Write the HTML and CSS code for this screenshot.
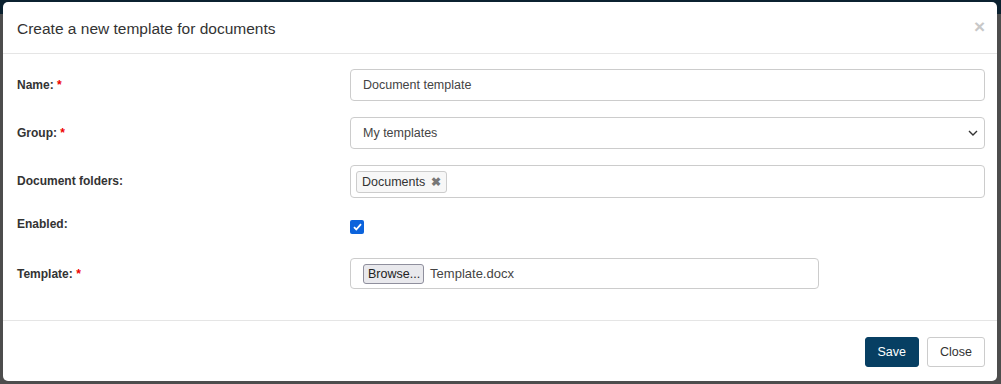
FILE: index.html
```html
<!DOCTYPE html>
<html lang="en">
<head>
  <meta charset="UTF-8" />
  <title>Create a new template</title>
  <link rel="stylesheet" href="styles.css">
</head>
<body>
  <div class="modal">
    <div class="modal-header">
      <h4>Create a new template for documents</h4>
      <span class="close-x">&times;</span>
    </div>

    <form class="modal-body">
      <div class="row">
        <label>Name: <span class="req">*</span></label>
        <input class="field" type="text" value="Document template" />
      </div>
      <div class="row">
        <label>Group: <span class="req">*</span></label>
        <div class="field select">
          <span>My templates</span>
          <svg width="10" height="6" viewBox="0 0 10 6"><path d="M1 1l4 4 4-4" fill="none" stroke="#333" stroke-width="1.4"/></svg>
        </div>
      </div>
      <div class="row">
        <label>Document folders:</label>
        <div class="field tags">
          <span class="tag">Documents <b>&#x2716;</b></span>
        </div>
      </div>
      <div class="row row-check">
        <label>Enabled:</label>
        <span class="check">
          <svg width="9" height="8" viewBox="0 0 9 8"><path d="M1 4.2l2.3 2.3L8 1.2" fill="none" stroke="#fff" stroke-width="1.8"/></svg>
        </span>
      </div>
      <div class="row row-file">
        <label>Template: <span class="req">*</span></label>
        <div class="field file">
          <span class="browse">Browse...</span>
          <span>Template.docx</span>
        </div>
      </div>
    </form>

    <div class="modal-footer">
      <button class="btn btn-primary" type="button">Save</button>
      <button class="btn" type="button">Close</button>
    </div>
  </div>
</body>
</html>
```

FILE: styles.css
```css
body {
  margin: 0;
  padding: 2px 4px 3px 3px;
  font-family: 'Liberation Sans', Arial, sans-serif;
  background: linear-gradient(#0b2130 0, #0b2130 14px, #4d4d4d 14px);
  color: #333;
}

.modal {
  background: #fff;
  border-radius: 5px;
  height: 379px;
  display: flex;
  flex-direction: column;
}

.modal-header {
  height: 51px;
  border-bottom: 1px solid #e5e5e5;
  display: flex;
  align-items: center;
  justify-content: space-between;
  padding: 0 12px 0 14px;
}

.modal-header h4 {
  margin: 0;
  font-size: 15.5px;
  font-weight: normal;
  color: #333;
  padding-top: 2px;
}

.close-x {
  color: #c8c8c8;
  font-size: 19px;
  font-weight: bold;
  margin-top: -2px;
}

.modal-body {
  flex: 1;
  padding: 15px 12px 0 14px;
  border-bottom: 1px solid #e5e5e5;
}

.row {
  display: grid;
  grid-template-columns: 333px 1fr;
  align-items: start;
  margin-bottom: 16px;
}

.row label {
  font-size: 12px;
  font-weight: bold;
  color: #333;
  padding-top: 9px;
}

.req {
  color: #e00;
}

.field {
  box-sizing: border-box;
  height: 32px;
  border: 1px solid #ccc;
  border-radius: 4px;
  padding: 0 12px;
  font: 12.5px 'Liberation Sans', Arial, sans-serif;
  color: #444;
  background: #fff;
  display: flex;
  align-items: center;
  width: 100%;
}

.select {
  justify-content: space-between;
  padding-right: 6px;
}

.tags {
  height: 33px;
  padding: 0 5px;
}

.tag {
  border: 1px solid #ccc;
  background: #f7f7f7;
  border-radius: 3px;
  padding: 3px 5px 3px 5px;
  font-size: 12.5px;
  color: #333;
}

.tag b {
  color: #777;
  font-size: 12px;
  margin-left: 2px;
}

.row-check {
  height: 28px;
}

.row-check label {
  padding-top: 3px;
}

.check {
  margin-top: 6px;
  width: 14px;
  height: 14px;
  border-radius: 2px;
  background: #0b63dc;
  display: flex;
  align-items: center;
  justify-content: center;
}

.file {
  width: 469px;
  height: 31px;
  padding: 0 6px 0 12px;
  gap: 6px;
  font-size: 13px;
}

.browse {
  background: #e9e9ed;
  border: 1px solid #8f8f9d;
  border-radius: 3px;
  padding: 2px 3px 2px 4px;
  font-size: 12.5px;
  color: #222;
}

.modal-footer {
  height: 58px;
  display: flex;
  align-items: center;
  justify-content: flex-end;
  gap: 8px;
  padding: 2px 12px 0;
}

.btn {
  height: 30px;
  padding: 0 12px;
  border: 1px solid #ccc;
  border-radius: 3px;
  background: #fff;
  font: 12.5px 'Liberation Sans', Arial, sans-serif;
  color: #333;
}

.btn-primary {
  padding: 0 12px;
  background: #073f63;
  border-color: #073f63;
  color: #fff;
}
```
